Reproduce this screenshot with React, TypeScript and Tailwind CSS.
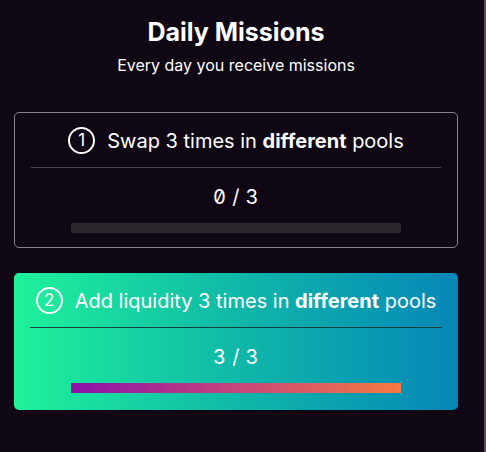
import React from "react";

function Mission({
  n,
  children,
  done,
  value,
}: {
  n: number;
  children: React.ReactNode;
  done?: boolean;
  value: string;
}) {
  return (
    <div
      className={
        done
          ? "rounded-[5px] h-[137px] px-4 flex flex-col bg-[linear-gradient(90deg,#1ff29a_0%,#0fb8a8_50%,#0686b8_100%)]"
          : "rounded-[5px] h-[136px] px-4 flex flex-col border border-[#8a8290]"
      }
    >
      <div className="h-[54px] flex items-center justify-center gap-3 text-white text-[20px] pt-[1px]">
        <span className="w-[27px] h-[27px] rounded-full border-2 border-white flex items-center justify-center text-[17px] leading-none">
          {n}
        </span>
        <span>{children}</span>
      </div>
      <div className={done ? "h-px bg-[#17403f]" : "h-px bg-[#4a4250]"} />
      <div className="h-[55px] flex items-center justify-center text-white text-[20px] tracking-[0.02em] slashed-zero tabular-nums pt-[2px]">
        {value}
      </div>
      <div className="flex justify-center">
        <div
          className={
            done
              ? "w-[330px] h-[10px] bg-[linear-gradient(90deg,#8a10aa,#c24080_45%,#f67a40)]"
              : "w-[330px] h-[10px] bg-[#2b262d]"
          }
        />
      </div>
    </div>
  );
}

export default function App() {
  return (
    <div
      className="w-[486px] h-[452px] bg-[#100714] flex overflow-hidden"
      style={{ fontFamily: "Inter, 'Noto Sans', sans-serif" }}
    >
      <div className="flex-1 pl-[14px] pr-[26px] flex flex-col">
        <div className="pt-[17px] text-center text-white font-bold text-[25px] leading-[30px]">
          Daily Missions
        </div>
        <div className="text-center text-white text-[16px] leading-[20px] mt-[8px]">
          Every day you receive missions
        </div>
        <div className="mt-[37px] flex flex-col gap-[25px]">
          <Mission n={1} value="0 / 3">
            Swap 3 times in <b>different</b> pools
          </Mission>
          <Mission n={2} value="3 / 3" done>
            Add liquidity 3 times in <b>different</b> pools
          </Mission>
        </div>
      </div>
      <div className="w-[2px] bg-[#5b4862]" />
    </div>
  );
}
